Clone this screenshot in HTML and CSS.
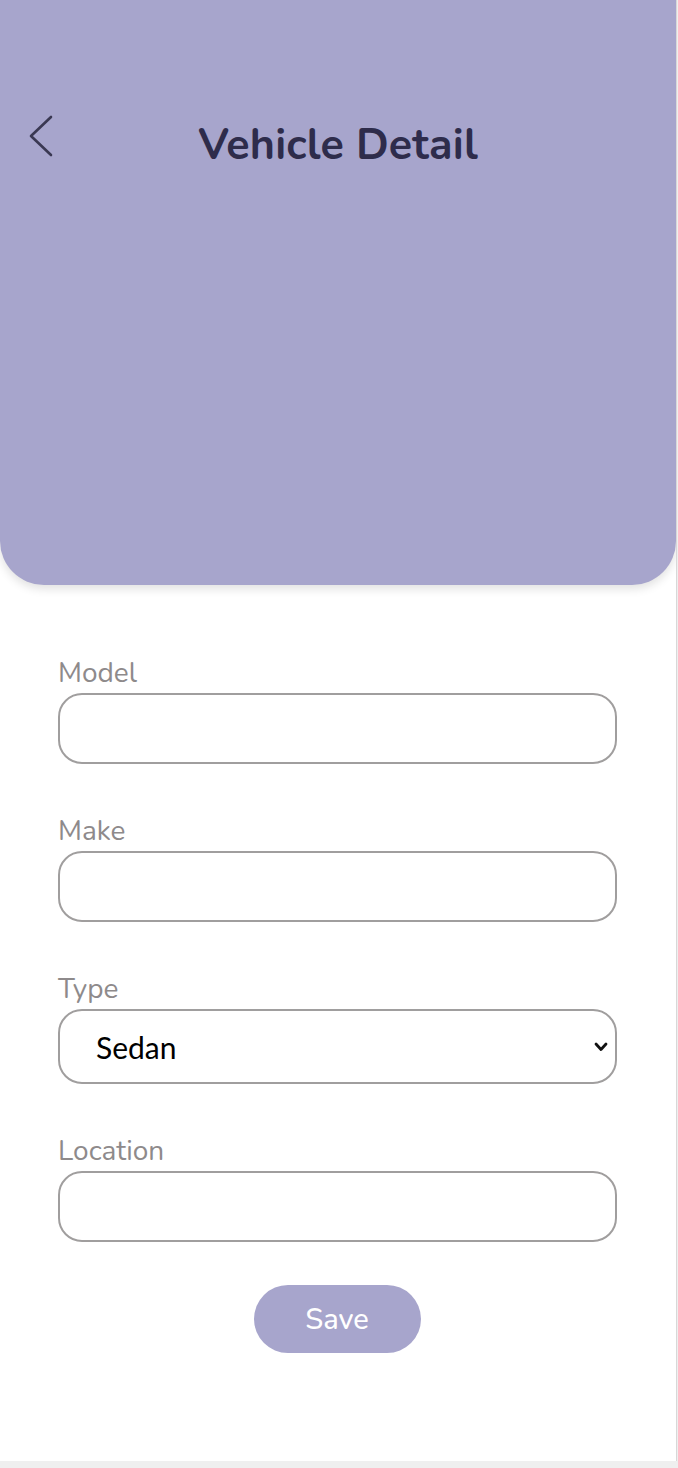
FILE: index.html
```html
<!DOCTYPE html>
<html lang="en">
<head>
<meta charset="utf-8">
<title>Vehicle Detail</title>
<link rel="stylesheet" href="styles.css">
</head>
<body>
<div class="app">
  <header class="hero">
    <div class="topbar">
      <button class="back" aria-label="Back">
        <svg width="26" height="44" viewBox="0 0 26 44"><polyline points="23,3 3,22 23,41" fill="none" stroke="#3a3852" stroke-width="2.6" stroke-linecap="round" stroke-linejoin="round"/></svg>
      </button>
      <h1 class="title">Vehicle Detail</h1>
    </div>
  </header>
  <form class="form">
    <div class="field">
      <label class="label">Model</label>
      <input class="input" type="text">
    </div>
    <div class="field">
      <label class="label">Make</label>
      <input class="input" type="text">
    </div>
    <div class="field">
      <label class="label">Type</label>
      <div class="select-wrap">
        <select class="select"><option>Sedan</option><option>SUV</option><option>Truck</option></select>
        <svg class="caret" width="14" height="10" viewBox="0 0 14 10"><polyline points="2,2 7,7.5 12,2" fill="none" stroke="#111" stroke-width="2.8" stroke-linecap="round" stroke-linejoin="round"/></svg>
      </div>
    </div>
    <div class="field">
      <label class="label">Location</label>
      <input class="input" type="text">
    </div>
    <div class="actions">
      <button type="button" class="save">Save</button>
    </div>
  </form>
</div>
</body>
</html>
```
FILE: styles.css
```css
html, body {
  margin: 0;
  padding: 0;
}
body {
  background: #efefef;
  font-family: "Nunito", "Noto Sans", "Open Sans", sans-serif;
}
.app {
  width: 676px;
  height: 1461px;
  background: #ffffff;
  box-shadow: 1px 0 0 #d8d8d8, 0 1px 0 #e4e4e4;
  overflow: hidden;
}
.hero {
  height: 585px;
  background: #a7a5cc;
  border-radius: 0 0 44px 44px;
  box-shadow: 0 4px 10px rgba(0, 0, 0, 0.12);
}
.topbar {
  position: relative;
  padding-top: 112px;
  display: flex;
  justify-content: center;
}
.back {
  position: absolute;
  left: 28px;
  top: 114px;
  background: none;
  border: 0;
  padding: 0;
  width: 26px;
  height: 44px;
}
.title {
  margin: 0;
  font-size: 43px;
  font-weight: 700;
  color: #2e2c4b;
  line-height: 66px;
  letter-spacing: 0.2px;
}
.form {
  padding: 68px 60px 0 58px;
  display: flex;
  flex-direction: column;
  gap: 47px;
}
.field {
  display: flex;
  flex-direction: column;
}
.label {
  font-size: 28px;
  line-height: 40px;
  color: #8e8a8b;
}
.input, .select {
  box-sizing: border-box;
  width: 559px;
  height: 71px;
  border: 2px solid #a09e9e;
  border-radius: 24px;
  background: #fff;
  font-size: 26px;
  padding: 0 20px;
  outline: none;
}
.select-wrap {
  position: relative;
  width: 559px;
}
.select {
  display: block;
  height: 75px;
  font-family: "Lato", sans-serif;
  font-size: 30px;
  color: #000;
  padding-left: 36px;
  padding-right: 40px;
  appearance: none;
  -webkit-appearance: none;
}
.caret {
  position: absolute;
  right: 9px;
  top: 33px;
  pointer-events: none;
}
.actions {
  display: flex;
  justify-content: center;
  margin-top: -4px;
}
.save {
  width: 167px;
  height: 68px;
  border: 0;
  border-radius: 34px;
  background: #a7a5cc;
  color: #fff;
  font-family: "Nunito", "Noto Sans", sans-serif;
  font-size: 29px;
  font-weight: 500;
}
```
